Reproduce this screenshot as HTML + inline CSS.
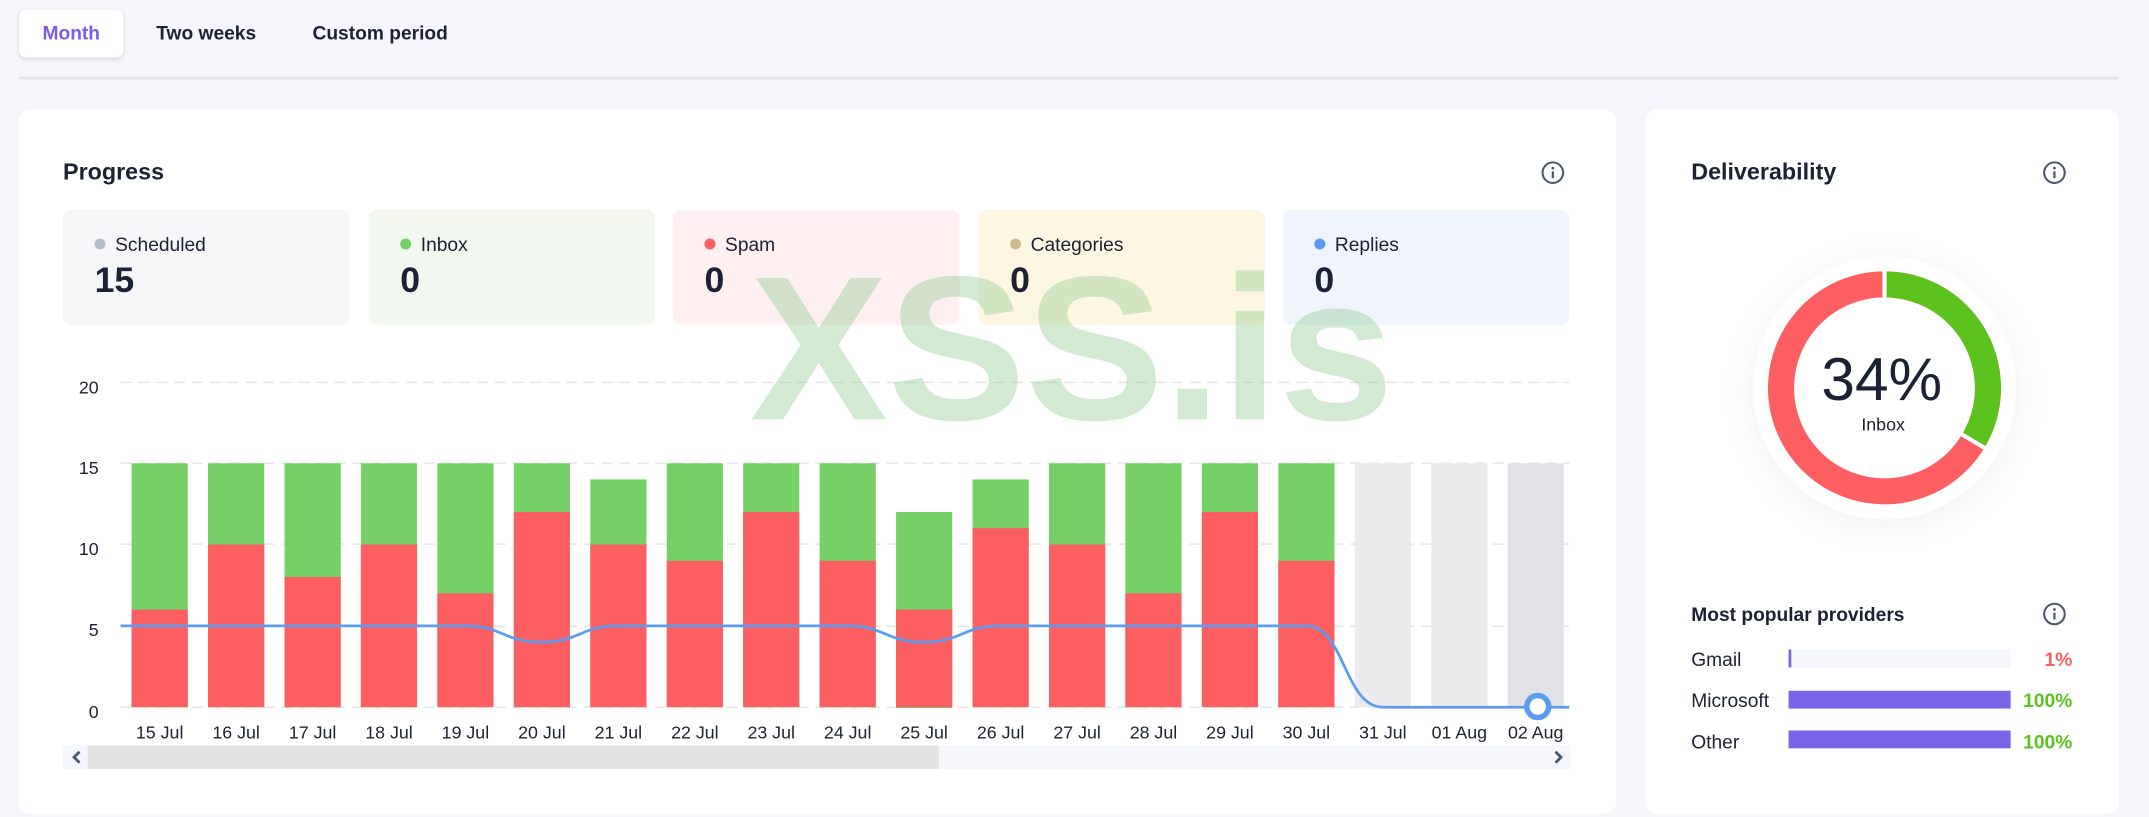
<!DOCTYPE html>
<html><head><meta charset="utf-8"><style>
html,body{margin:0;padding:0;width:2149px;height:817px;overflow:hidden;background:#f5f6fb;font-family:"Liberation Sans",Arial,sans-serif;color:#1c2133}
#w{position:absolute;left:0;top:0;width:1568px;height:596px;transform:scale(1.37054);transform-origin:0 0}
.a{position:absolute}
.tab{position:absolute;top:7px;height:35px;line-height:35px;font-size:14px;font-weight:bold;color:#1c2133}
.card{position:absolute;background:#fff;border-radius:8px}
.st{position:absolute;top:153px;height:84px;width:209px;border-radius:6px}
.st .l{position:absolute;left:38px;top:17px;font-size:14px;color:#1c2133}
.st .d{position:absolute;left:23px;top:21px;width:8px;height:8px;border-radius:50%}
.st .v{position:absolute;left:23px;top:36px;font-size:26px;font-weight:bold}
.pr{position:absolute;left:1234px;font-size:14px;color:#1c2133}
.bar{position:absolute;left:1305px;width:162px;height:13px}
.pc{position:absolute;right:56px;font-size:14px;font-weight:bold;color:#5cc21e}
</style></head><body><div id="w">
<div class="a" style="left:14px;top:7px;width:76px;height:35px;background:#fff;border-radius:5px;box-shadow:0 1px 3px rgba(0,0,0,.15)"></div>
<div class="tab" style="left:31px;color:#7b5ce8">Month</div>
<div class="tab" style="left:114px">Two weeks</div>
<div class="tab" style="left:228px">Custom period</div>
<div class="a" style="left:14px;top:56px;width:1532px;height:2px;background:#e3e4ea"></div>

<div class="card" style="left:14px;top:80px;width:1165px;height:514px"></div>
<div class="card" style="left:1201px;top:80px;width:345px;height:514px"></div>
<div class="a" style="left:46px;top:116px;font-size:17px;font-weight:bold">Progress</div>
<div class="st" style="left:46px;background:#f6f6f8"><div class="d" style="background:#b8bcc8"></div><div class="l">Scheduled</div><div class="v">15</div></div>
<div class="st" style="left:269px;background:#f2f8f0"><div class="d" style="background:#77d067"></div><div class="l">Inbox</div><div class="v">0</div></div>
<div class="st" style="left:491px;background:#fef0f0"><div class="d" style="background:#fd5e61"></div><div class="l">Spam</div><div class="v">0</div></div>
<div class="st" style="left:714px;background:#fdf7e2"><div class="d" style="background:#d2b88e"></div><div class="l">Categories</div><div class="v">0</div></div>
<div class="st" style="left:936px;background:#eff4fd"><div class="d" style="background:#5b9cf0"></div><div class="l">Replies</div><div class="v">0</div></div>

<svg class="a" style="left:0;top:0" width="1568" height="596">
<defs><g id="inf"><circle r="7.5" fill="none" stroke="#4a5570" stroke-width="1.5"/><circle cy="-3.3" r="1" fill="#4a5570"/><path d="M0 -1 V4" stroke="#4a5570" stroke-width="1.6"/></g></defs>
<use href="#inf" x="1133" y="126"/><use href="#inf" x="1499" y="126"/><use href="#inf" x="1499" y="448"/>
<g font-size="13" fill="#1c2133" text-anchor="end" font-family="Liberation Sans,Arial,sans-serif">
<text x="72" y="287">20</text><text x="72" y="346">15</text><text x="72" y="405">10</text><text x="72" y="464">5</text><text x="72" y="524">0</text></g>
<g stroke="#e3e3e6" stroke-dasharray="8 5" stroke-width="1"><line x1="88" x2="1145" y1="279" y2="279"/><line x1="88" x2="1145" y1="338" y2="338"/><line x1="88" x2="1145" y1="397" y2="397"/><line x1="88" x2="1145" y1="457" y2="457"/><line x1="88" x2="1145" y1="516" y2="516"/></g>
<g fill="#77d067">
<rect x="96" y="338" width="41" height="178"/><rect x="151.8" y="338" width="41" height="178"/><rect x="207.6" y="338" width="41" height="178"/><rect x="263.3" y="338" width="41" height="178"/><rect x="319.1" y="338" width="41" height="178"/><rect x="374.9" y="338" width="41" height="178"/><rect x="430.7" y="349.8" width="41" height="166"/><rect x="486.5" y="338" width="41" height="178"/><rect x="542.2" y="338" width="41" height="178"/><rect x="598" y="338" width="41" height="178"/><rect x="653.8" y="373.6" width="41" height="143"/><rect x="709.6" y="349.8" width="41" height="166"/><rect x="765.4" y="338" width="41" height="178"/><rect x="821.1" y="338" width="41" height="178"/><rect x="876.9" y="338" width="41" height="178"/><rect x="932.7" y="338" width="41" height="178"/></g>
<g fill="#fd5e61">
<rect x="96" y="444.8" width="41" height="71.2"/><rect x="151.8" y="397.3" width="41" height="118.7"/><rect x="207.6" y="421" width="41" height="95"/><rect x="263.3" y="397.3" width="41" height="118.7"/><rect x="319.1" y="432.9" width="41" height="83.1"/><rect x="374.9" y="373.6" width="41" height="142.4"/><rect x="430.7" y="397.3" width="41" height="118.7"/><rect x="486.5" y="409.2" width="41" height="106.8"/><rect x="542.2" y="373.6" width="41" height="142.4"/><rect x="598" y="409.2" width="41" height="106.8"/><rect x="653.8" y="444.8" width="41" height="71.2"/><rect x="709.6" y="385.4" width="41" height="130.6"/><rect x="765.4" y="397.3" width="41" height="118.7"/><rect x="821.1" y="432.9" width="41" height="83.1"/><rect x="876.9" y="373.6" width="41" height="142.4"/><rect x="932.7" y="409.2" width="41" height="106.8"/></g>
<rect x="988.5" y="338" width="41" height="178" fill="#ebebed"/><rect x="1044.3" y="338" width="41" height="178" fill="#ebebed"/><rect x="1100" y="338" width="41" height="178" fill="#e2e3e6"/>
<text x="782" y="306" font-size="150" font-weight="bold" fill="#8fcb8f" fill-opacity="0.4" text-anchor="middle" font-family="Liberation Sans,Arial,sans-serif" textLength="470" lengthAdjust="spacingAndGlyphs">XSS.is</text>
<path d="M88 456.7 H339.6 C367 456.7 367 468.5 395.4 468.5 C423 468.5 423 456.7 451.2 456.7 H618.5 C646 456.7 646 468.5 674.3 468.5 C702 468.5 702 456.7 730 456.7 H953.2 C981 456.7 981 516 1009 516 H1145" fill="none" stroke="#5b9cf0" stroke-width="2"/>
<circle cx="1122" cy="515.5" r="8" fill="#fff" stroke="#5b9cf0" stroke-width="4"/>
<g font-size="13" fill="#1c2133" text-anchor="middle" font-family="Liberation Sans,Arial,sans-serif">
<text x="116.5" y="539">15 Jul</text><text x="172.3" y="539">16 Jul</text><text x="228.1" y="539">17 Jul</text><text x="283.8" y="539">18 Jul</text><text x="339.6" y="539">19 Jul</text><text x="395.4" y="539">20 Jul</text><text x="451.2" y="539">21 Jul</text><text x="507" y="539">22 Jul</text><text x="562.7" y="539">23 Jul</text><text x="618.5" y="539">24 Jul</text><text x="674.3" y="539">25 Jul</text><text x="730.1" y="539">26 Jul</text><text x="785.9" y="539">27 Jul</text><text x="841.6" y="539">28 Jul</text><text x="897.4" y="539">29 Jul</text><text x="953.2" y="539">30 Jul</text><text x="1009" y="539">31 Jul</text><text x="1064.8" y="539">01 Aug</text><text x="1120.5" y="539">02 Aug</text></g>
<rect x="46" y="544" width="1100" height="17" fill="#f5f6fb"/>
<rect x="64" y="544" width="621" height="17" fill="#e2e2e3"/>
<path d="M58 548.5 L54 552.5 L58 556.5" fill="none" stroke="#4a5570" stroke-width="2"/>
<path d="M1135 548.5 L1139 552.5 L1135 556.5" fill="none" stroke="#4a5570" stroke-width="2"/>

<circle cx="1375" cy="283" r="96" fill="#fff" style="filter:drop-shadow(0 4px 12px rgba(0,0,0,.06))"/>
<circle cx="1375" cy="283" r="75.5" fill="none" stroke="#fd5e61" stroke-width="19"/>
<circle cx="1375" cy="283" r="75.5" fill="none" stroke="#5cc21e" stroke-width="19" stroke-dasharray="158 1000" transform="rotate(-90 1375 283)"/>
<path d="M1375 196 L1375 220 M1429 315.5 L1450 328" stroke="#fff" stroke-width="3"/>
<text x="1373" y="292" font-size="44" fill="#1c2133" text-anchor="middle" font-family="Liberation Sans,Arial,sans-serif">34%</text>
<text x="1374" y="314" font-size="13" fill="#1c2133" text-anchor="middle" font-family="Liberation Sans,Arial,sans-serif">Inbox</text>
</svg>

<div class="a" style="left:1234px;top:116px;font-size:17px;font-weight:bold">Deliverability</div>
<div class="a" style="left:1234px;top:440px;font-size:14px;font-weight:bold">Most popular providers</div>
<div class="pr" style="top:473px">Gmail</div><div class="bar" style="top:474px;background:#f5f6fb"><div style="width:2px;height:13px;background:#7b63e8"></div></div><div class="pc" style="top:473px;color:#fd5e61">1%</div>
<div class="pr" style="top:503px">Microsoft</div><div class="bar" style="top:504px;background:#7b63e8"></div><div class="pc" style="top:503px">100%</div>
<div class="pr" style="top:533px">Other</div><div class="bar" style="top:533px;background:#7b63e8"></div><div class="pc" style="top:533px">100%</div>
</div></body></html>
